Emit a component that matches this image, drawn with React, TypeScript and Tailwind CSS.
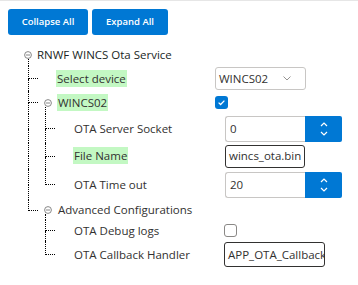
import React from 'react';

const FONT = "font-['Open_Sans','Noto_Sans',sans-serif]";

const MinusCircle = () => (
  <svg width="8" height="8" viewBox="0 0 8 8" className="block">
    <circle cx="4" cy="4" r="3.4" fill="none" stroke="#7a7a7a" strokeWidth="0.9" />
    <line x1="2" y1="4" x2="6" y2="4" stroke="#7a7a7a" strokeWidth="0.9" />
  </svg>
);

// one guide column of the tree: vertical dotted line, optional elbow into the row
const Guide = ({ elbow, last, through }: { elbow?: boolean; last?: boolean; through?: boolean }) => (
  <div className="flex flex-col w-[10px] h-full shrink-0">
    <div
      className={`flex-1 ${through || elbow ? 'border-l border-dotted border-black' : ''} ${
        elbow ? 'border-b' : ''
      }`}
    />
    <div className={`flex-1 ${(through || (elbow && !last)) ? 'border-l border-dotted border-black' : ''}`} />
  </div>
);

const Toggle = ({ open = true }: { open?: boolean }) => (
  <div className="flex flex-col h-full w-[8px] shrink-0">
    <div className="flex-1" />
    <MinusCircle />
    <div className={`flex-1 ${open ? 'ml-[1px] border-l border-dotted border-black' : ''}`} />
  </div>
);

const Label = ({ text, hl }: { text: string; hl?: boolean }) => (
  <span className={`px-[1px] py-[1px] leading-[16px] whitespace-nowrap ${hl ? 'bg-[#c3f8c3]' : ''}`}>{text}</span>
);

const Checkbox = ({ checked }: { checked?: boolean }) =>
  checked ? (
    <div className="w-[13px] h-[13px] rounded-[3px] bg-[#0078d4] flex items-center justify-center">
      <svg width="9" height="9" viewBox="0 0 9 9">
        <path d="M1.6 4.6 L3.6 6.5 L7.4 2.6" fill="none" stroke="white" strokeWidth="1.3" />
      </svg>
    </div>
  ) : (
    <div className="w-[13px] h-[13px] rounded-[3px] border border-[#8a8886] bg-white" />
  );

const Spin = ({ value }: { value: string }) => (
  <div className="flex h-[26px]">
    <div className="w-[80px] h-full border border-[#c8c6c4] border-r-0 rounded-l-[3px] px-[4px] flex items-center">
      {value}
    </div>
    <div className="w-[37px] h-full bg-[#0078d4] rounded-r-[2px] flex flex-col items-center justify-center gap-[4px]">
      <svg width="8" height="5" viewBox="0 0 8 5">
        <path d="M1 4 L4 1 L7 4" fill="none" stroke="white" strokeWidth="1.2" />
      </svg>
      <svg width="8" height="5" viewBox="0 0 8 5">
        <path d="M1 1 L4 4 L7 1" fill="none" stroke="white" strokeWidth="1.2" />
      </svg>
    </div>
  </div>
);

const TextBox = ({ value, w, h }: { value: string; w: string; h: string }) => (
  <div className={`${w} ${h} border border-[#323130] rounded-[3px] px-[3px] flex items-center overflow-hidden whitespace-nowrap`}>
    {value}
  </div>
);

export default function App() {
  return (
    <div className={`w-[358px] h-[285px] bg-white border-t border-[#e6e6e6] text-[11.5px] text-[#323130] ${FONT}`}>
      <div className="flex gap-[4px] pl-[8px] pt-[8px]">
        <button className="w-[80px] h-[26px] rounded-[3px] bg-[#0078d4] text-white text-[9.5px] font-semibold">
          Collapse All
        </button>
        <button className="w-[76px] h-[26px] rounded-[3px] bg-[#0078d4] text-white text-[9.5px] font-semibold">
          Expand All
        </button>
      </div>

      <div className="mt-[9px] flex flex-col">
        {/* root */}
        <div className="flex items-center h-[22px]">
          <div className="w-[24px] shrink-0" />
          <div className="flex flex-col h-full w-[8px] shrink-0">
            <div className="flex-1" />
            <MinusCircle />
            <div className="flex-1 ml-[4px] border-l border-dotted border-black" />
          </div>
          <div className="w-[5px]" />
          <span className="text-[#201f1e] whitespace-nowrap">RNWF WINCS Ota Service</span>
        </div>

        {/* Select device */}
        <div className="flex items-center h-[25px]">
          <div className="w-[28px] shrink-0" />
          <Guide elbow />
          <div className="w-[18px] shrink-0" />
          <div className="w-[159px] shrink-0">
            <Label text="Select device" hl />
          </div>
          <div className="w-[91px] h-[23px] border border-[#c8c6c4] rounded-[3px] flex items-center justify-between pl-[3px] pr-[14px]">
            <span>WINCS02</span>
            <svg width="8" height="5" viewBox="0 0 8 5">
              <path d="M0.5 0.5 L4 4 L7.5 0.5" fill="none" stroke="#8a8886" strokeWidth="0.9" />
            </svg>
          </div>
        </div>

        {/* WINCS02 */}
        <div className="flex items-center h-[23px]">
          <div className="w-[28px] shrink-0" />
          <Guide elbow />
          <div className="w-[6px] shrink-0" />
          <Toggle />
          <div className="w-[5px] shrink-0" />
          <div className="w-[158px] shrink-0">
            <Label text="WINCS02" hl />
          </div>
          <Checkbox checked />
        </div>

        {/* OTA Server Socket */}
        <div className="flex items-center h-[29px]">
          <div className="w-[28px] shrink-0" />
          <Guide through />
          <div className="w-[7px] shrink-0" />
          <Guide elbow />
          <div className="w-[18px] shrink-0" />
          <div className="w-[152px] shrink-0">
            <Label text="OTA Server Socket" />
          </div>
          <Spin value="0" />
        </div>

        {/* File Name */}
        <div className="flex items-center h-[26px]">
          <div className="w-[28px] shrink-0" />
          <Guide through />
          <div className="w-[7px] shrink-0" />
          <Guide elbow />
          <div className="w-[18px] shrink-0" />
          <div className="w-[152px] shrink-0">
            <Label text="File Name" hl />
          </div>
          <TextBox value="wincs_ota.bin" w="w-[80px]" h="h-[23px]" />
        </div>

        {/* OTA Time out */}
        <div className="flex items-center h-[31px]">
          <div className="w-[28px] shrink-0" />
          <Guide through />
          <div className="w-[7px] shrink-0" />
          <Guide elbow last />
          <div className="w-[18px] shrink-0" />
          <div className="w-[152px] shrink-0">
            <Label text="OTA Time out" />
          </div>
          <Spin value="20" />
        </div>

        {/* Advanced Configurations */}
        <div className="flex items-center h-[20px]">
          <div className="w-[28px] shrink-0" />
          <Guide elbow last />
          <div className="w-[6px] shrink-0" />
          <Toggle />
          <div className="w-[5px] shrink-0" />
          <Label text="Advanced Configurations" />
        </div>

        {/* OTA Debug logs */}
        <div className="flex items-center h-[21px]">
          <div className="w-[45px] shrink-0" />
          <Guide elbow />
          <div className="w-[18px] shrink-0" />
          <div className="w-[151px] shrink-0">
            <Label text="OTA Debug logs" />
          </div>
          <Checkbox />
        </div>

        {/* OTA Callback Handler */}
        <div className="flex items-center h-[27px]">
          <div className="w-[45px] shrink-0" />
          <Guide elbow last />
          <div className="w-[18px] shrink-0" />
          <div className="w-[151px] shrink-0">
            <Label text="OTA Callback Handler" />
          </div>
          <TextBox value="APP_OTA_Callback_Handler" w="w-[101px]" h="h-[25px]" />
        </div>
      </div>
    </div>
  );
}
